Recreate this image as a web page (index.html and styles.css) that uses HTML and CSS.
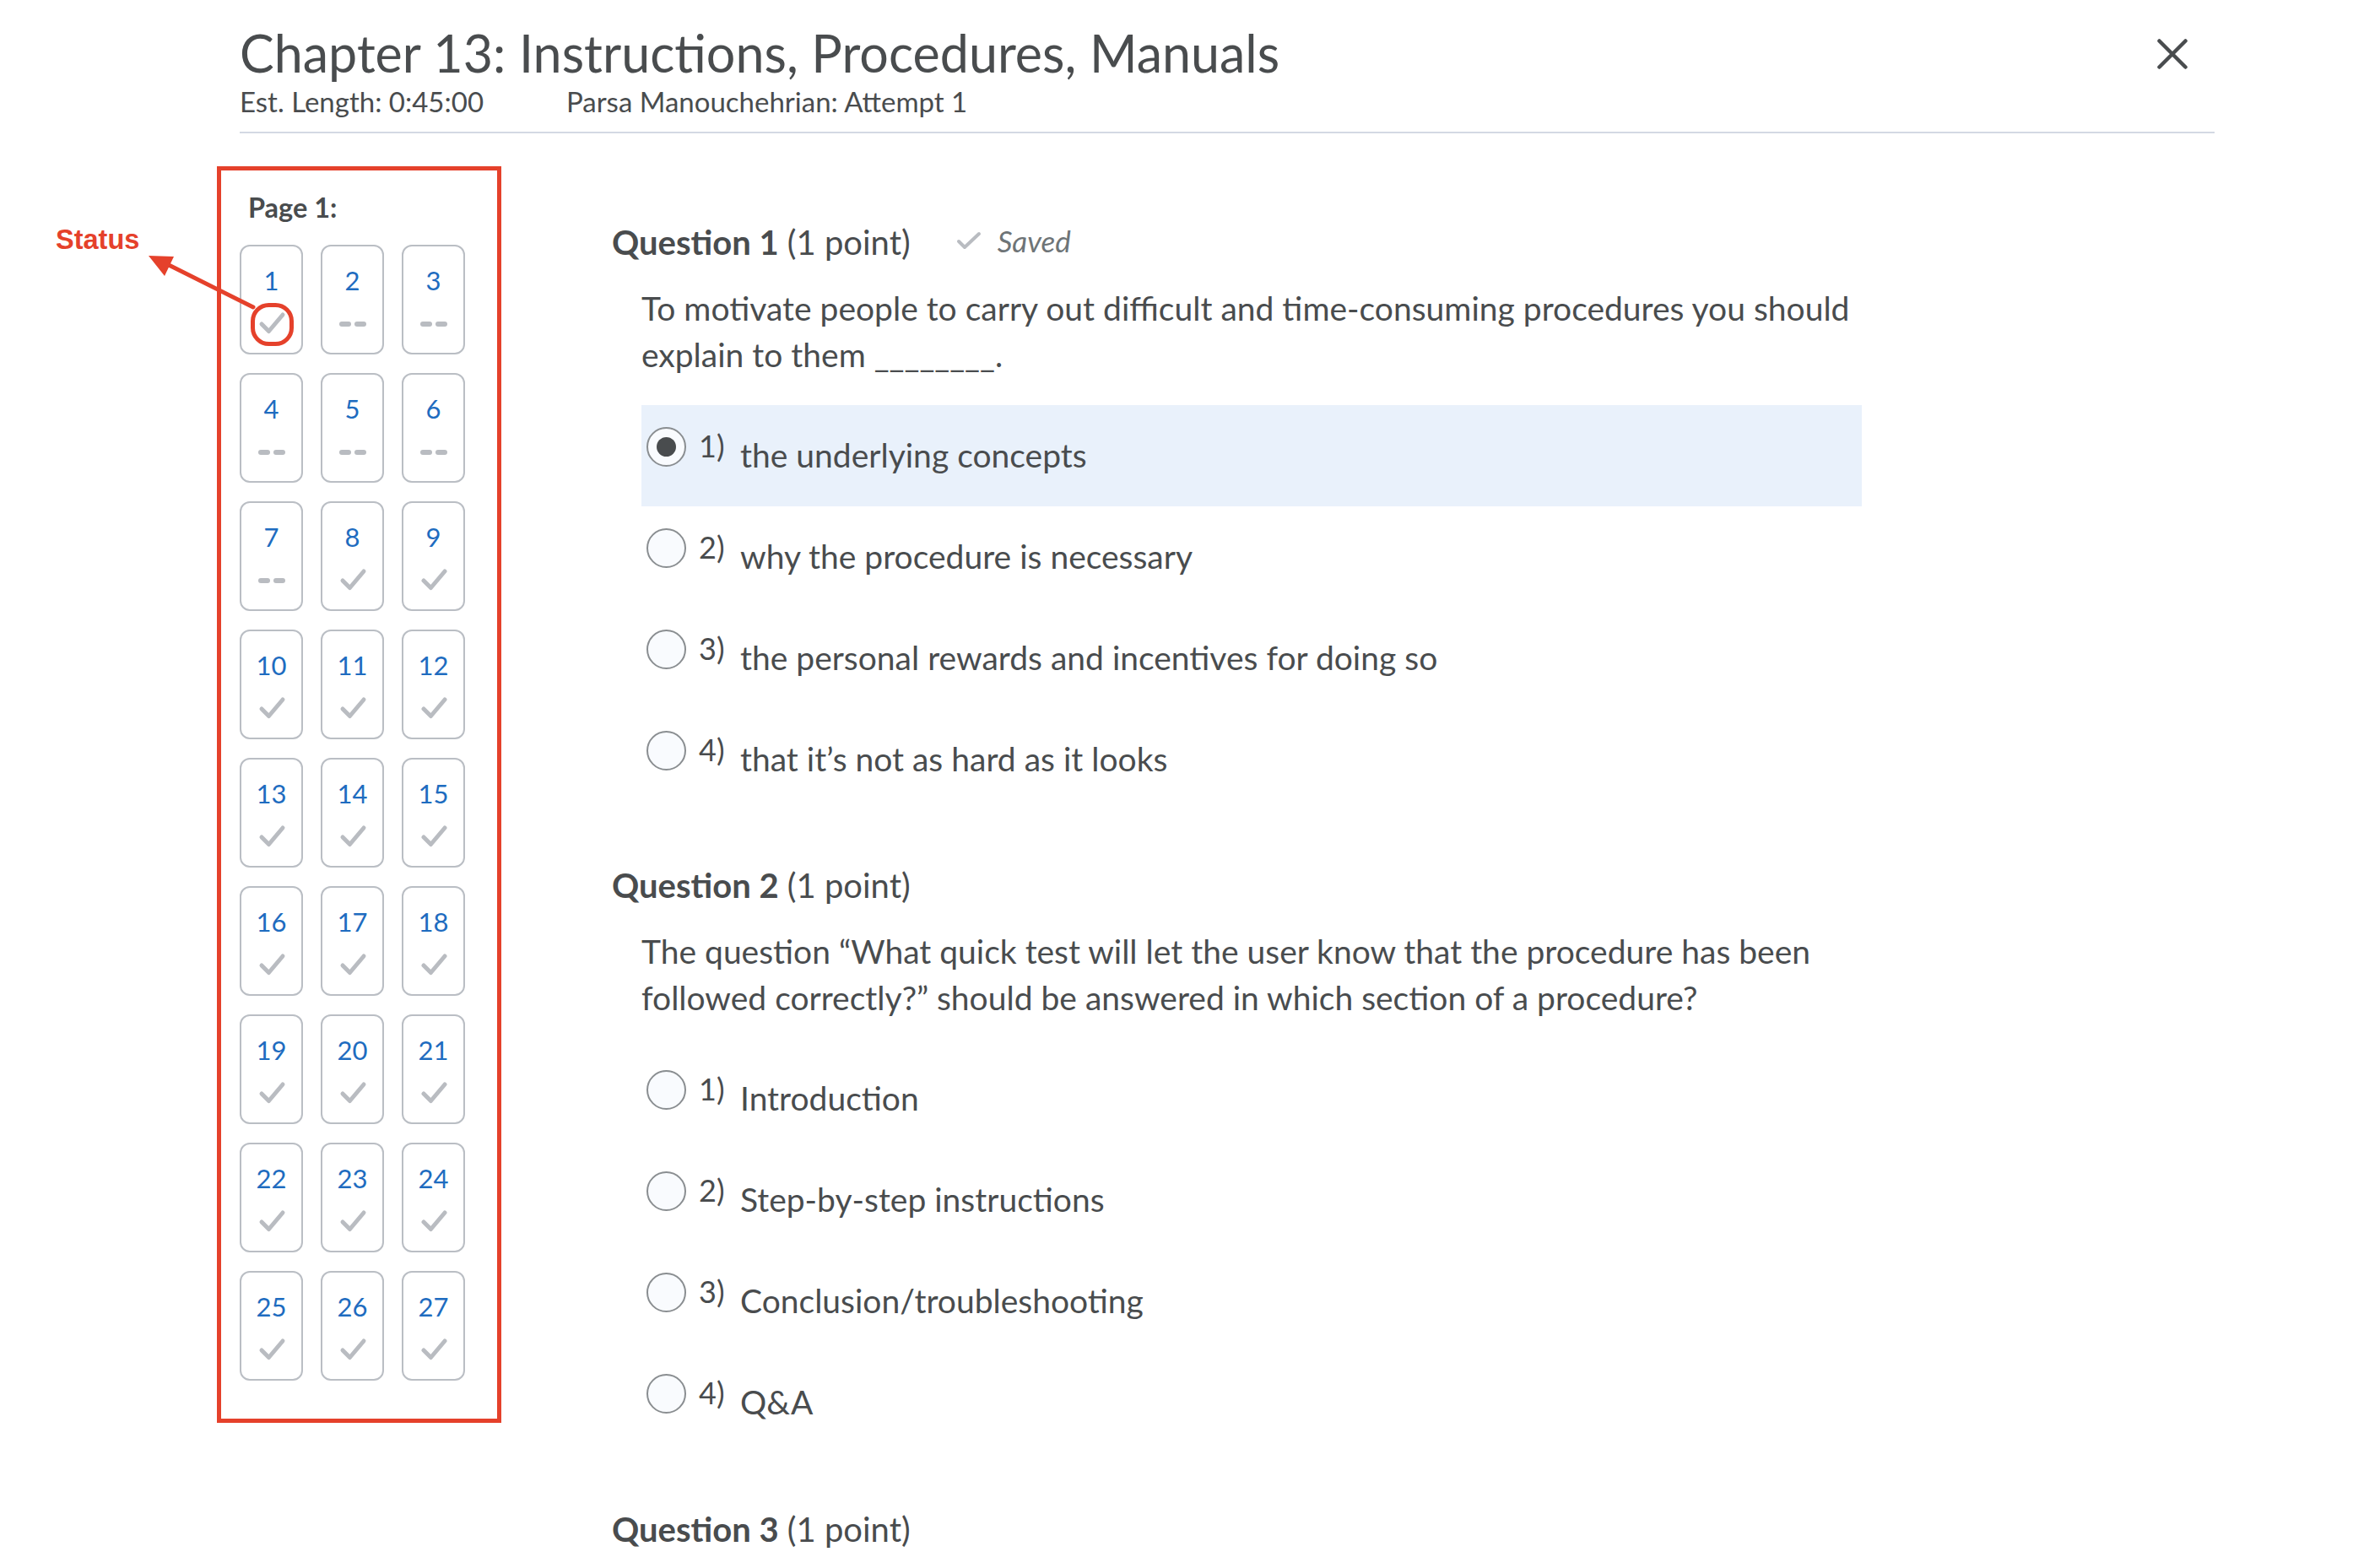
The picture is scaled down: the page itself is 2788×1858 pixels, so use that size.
FILE: index.html
```html
<!DOCTYPE html>
<html lang="en">
<head>
<meta charset="utf-8">
<title>Chapter 13: Instructions, Procedures, Manuals</title>
<link rel="stylesheet" href="styles.css">
</head>
<body>
<div class="page">
  <header class="quiz-header">
    <div class="titles">
      <h1 class="title">Chapter 13: Instructions, Procedures, Manuals</h1>
      <div class="meta"><span class="meta-length">Est. Length: 0:45:00</span><span>Parsa Manouchehrian: Attempt 1</span></div>
    </div>
    <button class="close" aria-label="Close">
      <svg viewBox="0 0 36 36" width="36" height="36"><path d="M2.5 2.5 L33.5 33.5 M33.5 2.5 L2.5 33.5" stroke="#494c4e" stroke-width="4.5" stroke-linecap="round" fill="none"/></svg>
    </button>
  </header>

  <div class="quiz-body">
    <aside class="nav">
      <div class="nav-title">Page 1:</div>
      <div class="tiles">
        <a class="tile"><span class="num">1</span><svg class="check" viewBox="0 0 36 30"><polyline points="6,16 14.5,24.5 31,5"/></svg></a>
        <a class="tile"><span class="num">2</span><span class="dash"><i></i><i></i></span></a>
        <a class="tile"><span class="num">3</span><span class="dash"><i></i><i></i></span></a>
        <a class="tile"><span class="num">4</span><span class="dash"><i></i><i></i></span></a>
        <a class="tile"><span class="num">5</span><span class="dash"><i></i><i></i></span></a>
        <a class="tile"><span class="num">6</span><span class="dash"><i></i><i></i></span></a>
        <a class="tile"><span class="num">7</span><span class="dash"><i></i><i></i></span></a>
        <a class="tile"><span class="num">8</span><svg class="check" viewBox="0 0 36 30"><polyline points="6,16 14.5,24.5 31,5"/></svg></a>
        <a class="tile"><span class="num">9</span><svg class="check" viewBox="0 0 36 30"><polyline points="6,16 14.5,24.5 31,5"/></svg></a>
        <a class="tile"><span class="num">10</span><svg class="check" viewBox="0 0 36 30"><polyline points="6,16 14.5,24.5 31,5"/></svg></a>
        <a class="tile"><span class="num">11</span><svg class="check" viewBox="0 0 36 30"><polyline points="6,16 14.5,24.5 31,5"/></svg></a>
        <a class="tile"><span class="num">12</span><svg class="check" viewBox="0 0 36 30"><polyline points="6,16 14.5,24.5 31,5"/></svg></a>
        <a class="tile"><span class="num">13</span><svg class="check" viewBox="0 0 36 30"><polyline points="6,16 14.5,24.5 31,5"/></svg></a>
        <a class="tile"><span class="num">14</span><svg class="check" viewBox="0 0 36 30"><polyline points="6,16 14.5,24.5 31,5"/></svg></a>
        <a class="tile"><span class="num">15</span><svg class="check" viewBox="0 0 36 30"><polyline points="6,16 14.5,24.5 31,5"/></svg></a>
        <a class="tile"><span class="num">16</span><svg class="check" viewBox="0 0 36 30"><polyline points="6,16 14.5,24.5 31,5"/></svg></a>
        <a class="tile"><span class="num">17</span><svg class="check" viewBox="0 0 36 30"><polyline points="6,16 14.5,24.5 31,5"/></svg></a>
        <a class="tile"><span class="num">18</span><svg class="check" viewBox="0 0 36 30"><polyline points="6,16 14.5,24.5 31,5"/></svg></a>
        <a class="tile"><span class="num">19</span><svg class="check" viewBox="0 0 36 30"><polyline points="6,16 14.5,24.5 31,5"/></svg></a>
        <a class="tile"><span class="num">20</span><svg class="check" viewBox="0 0 36 30"><polyline points="6,16 14.5,24.5 31,5"/></svg></a>
        <a class="tile"><span class="num">21</span><svg class="check" viewBox="0 0 36 30"><polyline points="6,16 14.5,24.5 31,5"/></svg></a>
        <a class="tile"><span class="num">22</span><svg class="check" viewBox="0 0 36 30"><polyline points="6,16 14.5,24.5 31,5"/></svg></a>
        <a class="tile"><span class="num">23</span><svg class="check" viewBox="0 0 36 30"><polyline points="6,16 14.5,24.5 31,5"/></svg></a>
        <a class="tile"><span class="num">24</span><svg class="check" viewBox="0 0 36 30"><polyline points="6,16 14.5,24.5 31,5"/></svg></a>
        <a class="tile"><span class="num">25</span><svg class="check" viewBox="0 0 36 30"><polyline points="6,16 14.5,24.5 31,5"/></svg></a>
        <a class="tile"><span class="num">26</span><svg class="check" viewBox="0 0 36 30"><polyline points="6,16 14.5,24.5 31,5"/></svg></a>
        <a class="tile"><span class="num">27</span><svg class="check" viewBox="0 0 36 30"><polyline points="6,16 14.5,24.5 31,5"/></svg></a>
      </div>
    </aside>

    <main class="questions">
      <section class="question">
        <h2 class="q-head"><strong>Question 1</strong><span class="points">(1 point)</span><span class="saved"><svg class="saved-check" viewBox="0 0 30 22"><polyline points="3,12 10,19 27,3"/></svg><em>Saved</em></span></h2>
        <p class="q-text">To motivate people to carry out difficult and time-consuming procedures you should explain to them ________.</p>
        <div class="options">
          <label class="option selected"><span class="radio checked"></span><span class="opt-num">1)</span><span class="opt-text">the underlying concepts</span></label>
          <label class="option"><span class="radio"></span><span class="opt-num">2)</span><span class="opt-text">why the procedure is necessary</span></label>
          <label class="option"><span class="radio"></span><span class="opt-num">3)</span><span class="opt-text">the personal rewards and incentives for doing so</span></label>
          <label class="option"><span class="radio"></span><span class="opt-num">4)</span><span class="opt-text">that it’s not as hard as it looks</span></label>
        </div>
      </section>

      <section class="question">
        <h2 class="q-head"><strong>Question 2</strong><span class="points">(1 point)</span></h2>
        <p class="q-text">The question “What quick test will let the user know that the procedure has been followed correctly?” should be answered in which section of a procedure?</p>
        <div class="options">
          <label class="option"><span class="radio"></span><span class="opt-num">1)</span><span class="opt-text">Introduction</span></label>
          <label class="option"><span class="radio"></span><span class="opt-num">2)</span><span class="opt-text">Step-by-step instructions</span></label>
          <label class="option"><span class="radio"></span><span class="opt-num">3)</span><span class="opt-text">Conclusion/troubleshooting</span></label>
          <label class="option"><span class="radio"></span><span class="opt-num">4)</span><span class="opt-text">Q&amp;A</span></label>
        </div>
      </section>

      <section class="question">
        <h2 class="q-head"><strong>Question 3</strong><span class="points">(1 point)</span></h2>
      </section>
    </main>
  </div>
</div>

<div class="annotation-label">Status</div>
<svg class="annotation" viewBox="0 0 2788 1858" width="2788" height="1858">
  <line x1="300" y1="364" x2="200" y2="314" stroke="#e5412b" stroke-width="5" stroke-linecap="round"/>
  <polygon points="176,303 206,304 195,327" fill="#e5412b"/>
  <rect x="299.5" y="361.5" width="46" height="46" rx="19" ry="19" fill="none" stroke="#e5412b" stroke-width="5"/>
</svg>
</body>
</html>
```
FILE: styles.css
```css
* { box-sizing: border-box; }

html, body {
  margin: 0;
  padding: 0;
  background: #ffffff;
}

body {
  position: relative;
  width: 2788px;
  height: 1858px;
  overflow: hidden;
  font-family: Lato, "Open Sans", "Liberation Sans", sans-serif;
  color: #494c4e;
}

.page {
  margin-left: 284px;
  width: 2340px;
  padding-top: 25px;
}

/* ---------- header ---------- */
.quiz-header {
  display: flex;
  justify-content: space-between;
  align-items: flex-start;
  padding-bottom: 18px;
  border-bottom: 2px solid #d3d9e3;
}

.title {
  margin: 0;
  font-size: 61px;
  line-height: 76px;
  font-weight: 400;
  color: #494c4e;
}

.meta {
  margin-top: 1px;
  display: flex;
  font-size: 33px;
  line-height: 36px;
}

.meta-length {
  width: 387px;
}

.close {
  margin: 21px 32px 0 0;
  padding: 0;
  border: 0;
  background: none;
  width: 36px;
  height: 36px;
}

.close svg { display: block; }

/* ---------- body ---------- */
.quiz-body {
  display: flex;
  align-items: flex-start;
  margin-top: 39px;
}

.nav {
  margin-left: -27px;
  width: 337px;
  border: 5px solid #e5412b;
  padding: 25px 0 45px 22px;
}

.nav-title {
  padding-left: 10px;
  font-size: 32.5px;
  line-height: 38px;
  font-weight: 700;
}

.tiles {
  margin-top: 25px;
  display: grid;
  grid-template-columns: repeat(3, 75px);
  column-gap: 21px;
  row-gap: 22px;
}

.tile {
  height: 130px;
  border: 2px solid #babec4;
  border-radius: 12px;
  display: flex;
  flex-direction: column;
  align-items: center;
  padding-top: 21px;
}

.num {
  font-size: 31px;
  line-height: 38px;
  color: #1e6cc0;
}

.check {
  margin-top: 17px;
  width: 36px;
  height: 30px;
  fill: none;
  stroke: #b9bcc1;
  stroke-width: 5;
  stroke-linecap: round;
  stroke-linejoin: round;
}

.dash {
  margin-top: 30px;
  display: flex;
  gap: 4px;
}

.dash i {
  display: block;
  width: 14px;
  height: 6px;
  border-radius: 3px;
  background: #b9bcc1;
}

/* ---------- questions ---------- */
.questions {
  margin-left: 131px;
  padding-top: 67px;
}

.question + .question {
  margin-top: 66px;
}

.question:last-child {
  margin-top: 67px;
}

.q-head {
  margin: 0;
  display: flex;
  align-items: flex-start;
  font-size: 40px;
  line-height: 46px;
  font-weight: 400;
}

.q-head strong { font-weight: 700; }

.points { margin-left: 10px; }

.saved {
  margin: -2px 0 0 54px;
  display: flex;
  align-items: center;
  font-size: 35px;
  line-height: 46px;
  color: #6e7477;
}

.saved-check {
  width: 30px;
  height: 22px;
  margin-right: 19px;
  fill: none;
  stroke: #b9bcc1;
  stroke-width: 4;
  stroke-linecap: round;
  stroke-linejoin: round;
}

.saved em { font-style: italic; }

.q-text {
  margin: 28px 0 0 35px;
  width: 1460px;
  font-size: 39px;
  line-height: 55px;
}

.options {
  margin: 32px 0 0 35px;
  width: 1446px;
}

.option {
  display: flex;
  align-items: flex-start;
  height: 120px;
  padding: 26px 0 0 6px;
}

.option.selected {
  background: #e9f1fb;
}

.radio {
  flex: none;
  width: 47px;
  height: 47px;
  border-radius: 50%;
  border: 2px solid #8a8e91;
  background: #f9fbfe;
  display: flex;
  align-items: center;
  justify-content: center;
}

.radio.checked::after {
  content: "";
  width: 23px;
  height: 23px;
  border-radius: 50%;
  background: #494c4e;
}

.opt-num {
  flex: none;
  width: 49px;
  margin-left: 15px;
  margin-top: 2px;
  font-size: 36px;
  line-height: 40px;
}

.opt-text {
  margin-top: 6px;
  font-size: 39px;
  line-height: 55px;
}

/* ---------- annotation overlay ---------- */
.annotation-label {
  position: absolute;
  left: 66px;
  top: 268px;
  font-family: "Liberation Sans", Arial, sans-serif;
  font-weight: 700;
  font-size: 32.5px;
  line-height: 1;
  color: #e5412b;
}

.annotation {
  position: absolute;
  left: 0;
  top: 0;
  pointer-events: none;
}
```
